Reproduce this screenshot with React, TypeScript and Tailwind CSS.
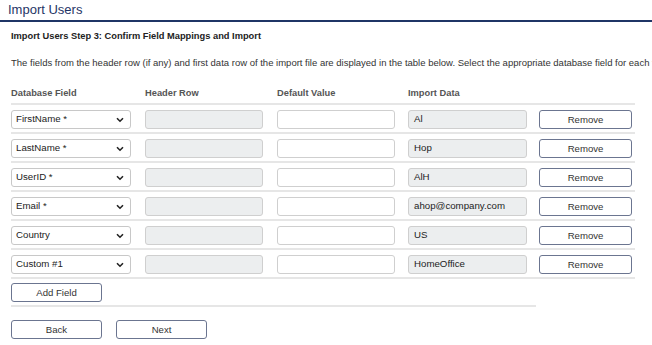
import React from "react";

const rows = [
  { field: "FirstName *", data: "Al" },
  { field: "LastName *", data: "Hop" },
  { field: "UserID *", data: "AlH" },
  { field: "Email *", data: "ahop@company.com" },
  { field: "Country", data: "US" },
  { field: "Custom #1", data: "HomeOffice" },
];

function Chevron() {
  return (
    <svg width="8" height="6" viewBox="0 0 8 6" className="shrink-0">
      <path d="M1 1.2 L4 4.2 L7 1.2" fill="none" stroke="#222" strokeWidth="1.6" />
    </svg>
  );
}

function Btn({ label, w = "w-[92px]" }: { label: string; w?: string }) {
  return (
    <button
      className={`${w} flex h-[19px] items-center justify-center rounded-[3px] border border-[#6b7590] bg-white text-[9.6px] leading-none text-[#333]`}
    >
      {label}
    </button>
  );
}

export default function App() {
  return (
    <div
      className="w-[652px] h-[345px] overflow-hidden bg-white text-[#333]"
      style={{ fontFamily: '"Liberation Sans", Arial, sans-serif' }}
    >
      <div className="h-[22px] border-b-[2px] border-[#1f3566] pl-[8px]">
        <div className="text-[13px] leading-[20px] text-[#1f3566]">Import Users</div>
      </div>
      <div className="px-[11px]">
        <div className="mt-[8px] text-[9.3px] leading-[13px] font-bold text-[#222]">
          Import Users Step 3: Confirm Field Mappings and Import
        </div>
        <div className="mt-[13px] whitespace-nowrap text-[9.5px] leading-[13px] text-[#333]">
          The fields from the header row (if any) and first data row of the import file are displayed in the table below. Select the appropriate database field for each field in the import file.
        </div>
        <div className="mt-[18px] w-[624px]">
          <div className="flex h-[18px] border-b-[2px] border-[#e6e6e6] text-[9.3px] leading-[13px] font-bold text-[#555]">
            <div className="w-[134px]">Database Field</div>
            <div className="w-[132px]">Header Row</div>
            <div className="w-[131px]">Default Value</div>
            <div className="w-[131px]">Import Data</div>
          </div>
          {rows.map((r) => (
            <div
              key={r.field}
              className="flex h-[29px] items-start border-b-[2px] border-[#e6e6e6] pt-[5px]"
            >
              <div className="w-[134px]">
                <div className="flex h-[19px] w-[120px] items-center justify-between rounded-[3px] border border-[#c8c8c8] bg-white pl-[4px] pr-[6px] text-[9.7px] text-[#222]">
                  <span>{r.field}</span>
                  <Chevron />
                </div>
              </div>
              <div className="w-[132px]">
                <div className="h-[19px] w-[118px] rounded-[3px] border border-[#cfcfcf] bg-[#eceeef]" />
              </div>
              <div className="w-[131px]">
                <div className="h-[19px] w-[118px] rounded-[3px] border border-[#cfcfcf] bg-white" />
              </div>
              <div className="w-[131px]">
                <div className="flex h-[19px] w-[119px] items-center rounded-[3px] border border-[#cfcfcf] bg-[#eceeef] pl-[5px] text-[9.7px] text-[#222]">
                  {r.data}
                </div>
              </div>
              <Btn label="Remove" w="w-[93px]" />
            </div>
          ))}
          <div className="w-[525px] border-b-[2px] border-[#e6e6e6] pt-[4px] pb-[3px]">
            <Btn label="Add Field" w="w-[91px]" />
          </div>
          <div className="mt-[13px] flex gap-[14px]">
            <Btn label="Back" w="w-[91px]" />
            <Btn label="Next" w="w-[91px]" />
          </div>
        </div>
      </div>
    </div>
  );
}
